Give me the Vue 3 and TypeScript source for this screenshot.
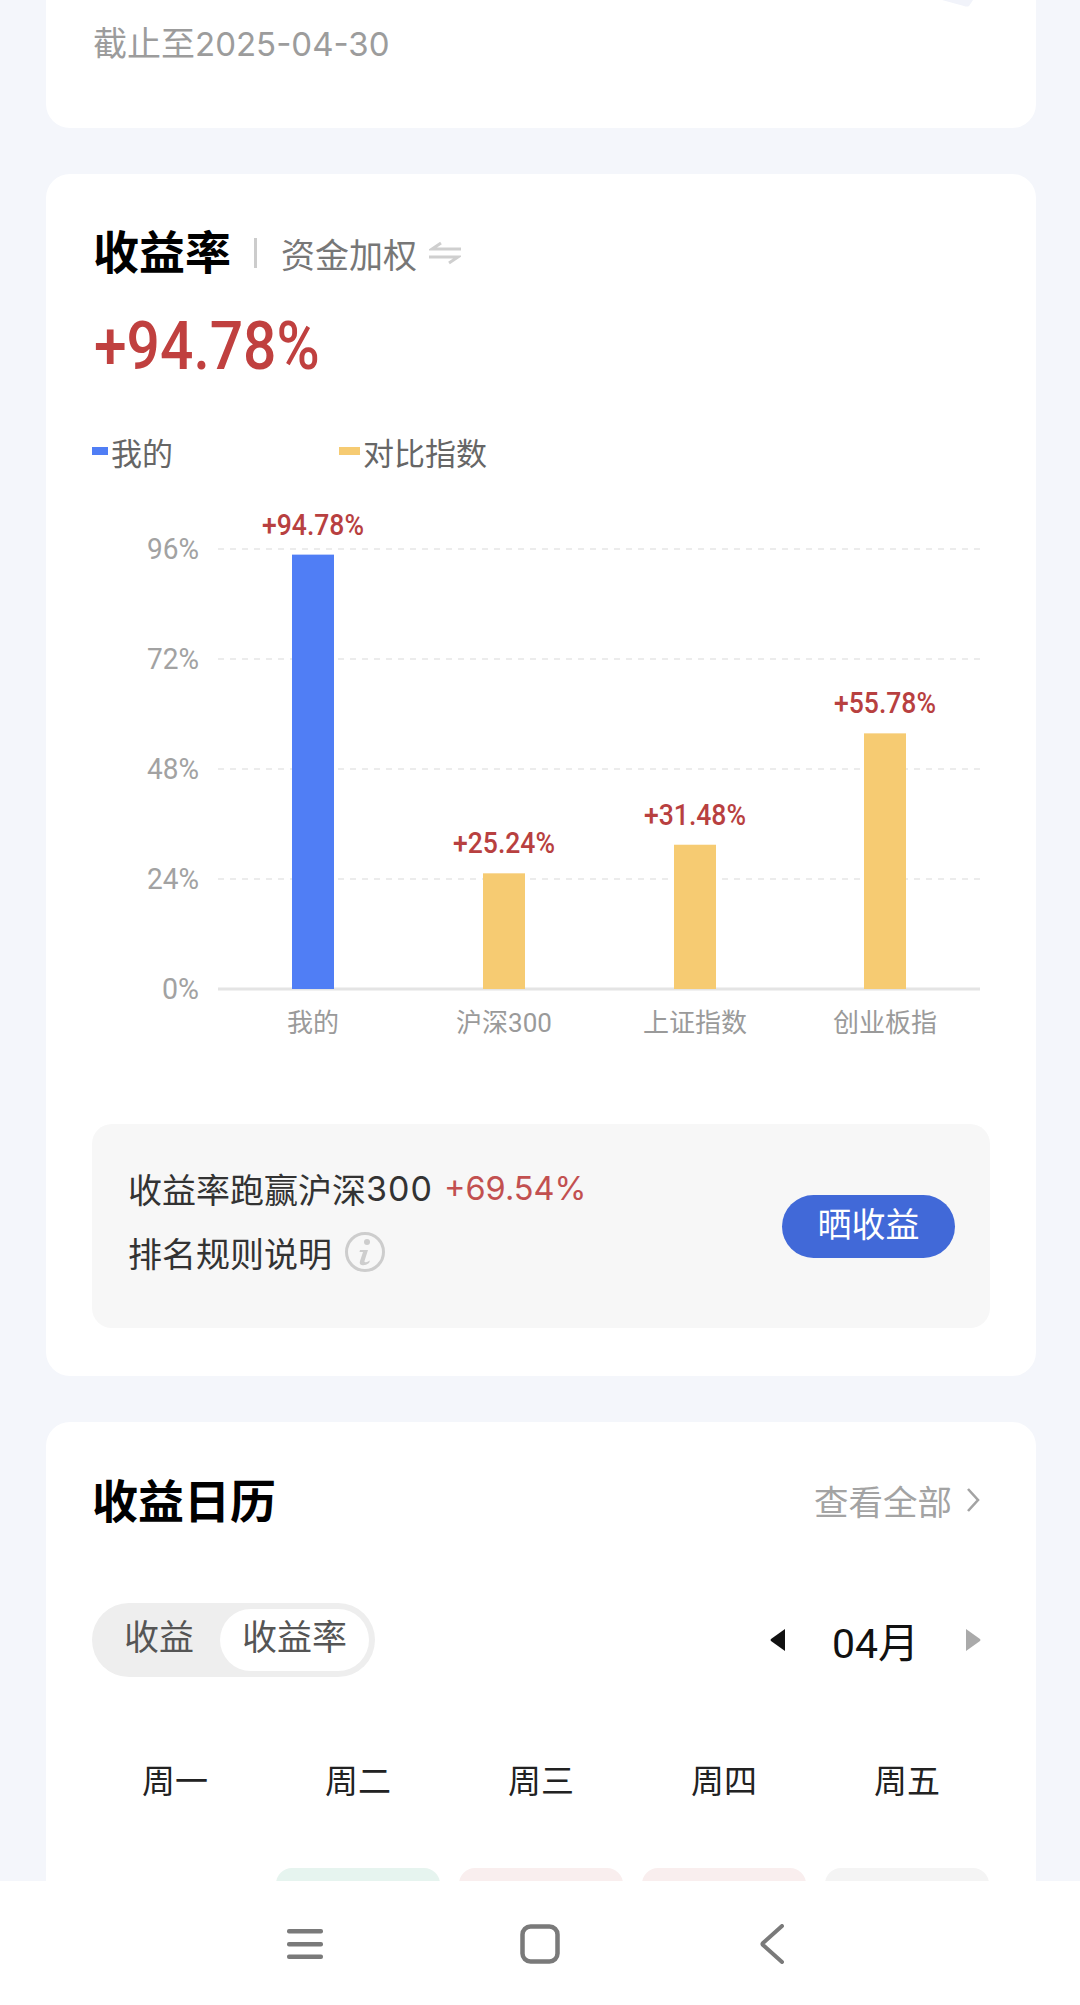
<script setup lang="ts">
interface Bar {
  name: string
  value: number
  label: string
  color: string
  x: number
}

const baseY = 989
const perPct = 4.583

const bars: Bar[] = [
  { name: '我的', value: 94.78, label: '+94.78%', color: '#507ef5', x: 313 },
  { name: '沪深300', value: 25.24, label: '+25.24%', color: '#f6cb72', x: 504 },
  { name: '上证指数', value: 31.48, label: '+31.48%', color: '#f6cb72', x: 695 },
  { name: '创业板指', value: 55.78, label: '+55.78%', color: '#f6cb72', x: 885 },
]
const ticks = [96, 72, 48, 24]
const weekdays = ['周一', '周二', '周三', '周四', '周五']
const cells = ['', '#e6f4ef', '#f9eeee', '#f9eeee', '#f4f4f4']

function tickY(t: number) {
  return baseY - t * perPct
}
</script>

<template>
  <div class="page">
    <section class="card card-top">
      <div class="date">截止至<span class="date-num">2025-04-30</span></div>
      <svg class="corner-mark" width="34" height="8" viewBox="0 0 34 8">
        <path d="M0 0 H31 L27 6 Q25 7 22 6 Z" fill="#f1f3fa" />
      </svg>
    </section>

    <section class="card card-rate">
      <div class="title-row">
        <h2 class="title">收益率</h2>
        <i class="divider"></i>
        <span class="mode">资金加权</span>
        <svg class="swap" width="32" height="24" viewBox="0 0 32 24" fill="none" stroke="#cfcfcf" stroke-width="3">
          <path d="M32 8 H3 L12 2" />
          <path d="M0 16 H29 L20 22" />
        </svg>
      </div>
      <div class="total">+94.78%</div>
      <div class="legend">
        <div class="legend-item mine"><i></i>我的</div>
        <div class="legend-item index"><i></i>对比指数</div>
      </div>

      <svg class="chart" width="990" height="560" viewBox="46 500 990 560">
        <g v-for="t in ticks" :key="t">
          <line x1="218" x2="980" :y1="tickY(t)" :y2="tickY(t)" stroke="#ececec" stroke-width="2" stroke-dasharray="6 6" />
          <text class="axis" x="199" :y="tickY(t) + 10" text-anchor="end" textLength="52" lengthAdjust="spacingAndGlyphs">{{ t }}%</text>
        </g>
        <text class="axis" x="199" :y="baseY + 10" text-anchor="end" textLength="37" lengthAdjust="spacingAndGlyphs">0%</text>
        <line x1="218" x2="980" :y1="baseY" :y2="baseY" stroke="#e4e4e4" stroke-width="3" />
        <g v-for="b in bars" :key="b.name">
          <rect :x="b.x - 21" :y="baseY - b.value * perPct" width="42" :height="b.value * perPct" :fill="b.color" />
          <text class="val" :x="b.x - 51" :y="baseY - b.value * perPct - 20" textLength="102" lengthAdjust="spacingAndGlyphs">{{ b.label }}</text>
          <text class="cat" :x="b.x" y="1032" text-anchor="middle">{{ b.name }}</text>
        </g>
      </svg>

      <div class="beat">
        <div class="beat-text">
          <div class="beat-line">收益率跑赢沪深<span class="num">300</span><span class="beat-pct">+69.54%</span></div>
          <div class="beat-line rule">排名规则说明<svg width="42" height="42" viewBox="0 0 42 42">
              <circle cx="21" cy="21" r="18.5" fill="none" stroke="#cdcdcd" stroke-width="3" />
              <circle cx="23" cy="11" r="3" fill="#cdcdcd" />
              <path d="M16 19 H24 L20.5 30 Q20 32 23 31 L26 29.5 L25 32 Q21 35 17.5 34 Q15 33 16 30 L19 21 H15.5 Z" fill="#cdcdcd" />
            </svg></div>
        </div>
        <div class="share">晒收益</div>
      </div>
    </section>

    <section class="card card-cal">
      <div class="cal-head">
        <h2 class="title">收益日历</h2>
        <div class="more">
          查看全部
          <svg width="14" height="26" viewBox="0 0 14 26" fill="none" stroke="#a3a3a3" stroke-width="2.6">
            <path d="M2 2 L12 13 L2 24" />
          </svg>
        </div>
      </div>
      <div class="cal-tools">
        <div class="seg">
          <span class="seg-item">收益</span>
          <span class="seg-item on">收益率</span>
        </div>
        <div class="month">
          <svg width="15" height="24" viewBox="0 0 15 24"><path d="M15 1 V23 L1 13 Q0 12 1 11 Z" fill="#111" /></svg>
          <span>04月</span>
          <svg width="15" height="24" viewBox="0 0 15 24"><path d="M0 1 V23 L14 13 Q15 12 14 11 Z" fill="#aaa" /></svg>
        </div>
      </div>
      <div class="week">
        <span v-for="d in weekdays" :key="d">{{ d }}</span>
      </div>
      <div class="days">
        <div v-for="(c, i) in cells" :key="i" class="day" :style="{ background: c || 'transparent' }"></div>
      </div>
    </section>

    <nav class="navbar">
      <svg width="38" height="32" viewBox="0 0 38 32" fill="#7a7a7a">
        <rect x="1" y="1" width="36" height="4.5" rx="2" />
        <rect x="1" y="14" width="36" height="4.5" rx="2" />
        <rect x="1" y="26.500" width="36" height="4.500" rx="2" />
      </svg>
      <svg width="40" height="40" viewBox="0 0 40 40" fill="none" stroke="#7a7a7a" stroke-width="4.500">
        <rect x="2.500" y="2.500" width="35" height="35" rx="8" />
      </svg>
      <svg width="26" height="40" viewBox="0 0 26 40" fill="none" stroke="#7a7a7a" stroke-width="4" stroke-linecap="round" stroke-linejoin="round">
        <path d="M23 2 L4 19 Q3 20 4 21 L23 38" />
      </svg>
    </nav>
  </div>
</template>

<style scoped>
.page {
  position: relative;
  width: 1080px;
  height: 2005px;
  overflow: hidden;
  background: #f4f6fb;
  padding: 0 44px 0 46px;
  box-sizing: border-box;
  font-family: Roboto, "Noto Sans CJK SC", sans-serif;
  color: #333;
}
.card {
  position: relative;
  background: #fff;
  border-radius: 24px;
  margin-bottom: 46px;
  width: 990px;
}
.card-top {
  height: 128px;
  border-radius: 0 0 24px 24px;
  padding: 20px 0 0 47px;
  box-sizing: border-box;
}
.date {
  font-size: 34px;
  line-height: 48px;
  color: #9c9c9c;
}
.date-num { font-family: Inter, sans-serif; font-size: 33px; }
.corner-mark { position: absolute; right: 60px; top: 0; }

.card-rate { height: 1202px; padding-top: 48px; box-sizing: border-box; }
.title-row {
  display: flex;
  align-items: center;
  padding-left: 47px;
  height: 62px;
}
.title {
  margin: 0;
  font-size: 46px;
  line-height: 62px;
  font-weight: 700;
  color: #000;
}
.divider {
  width: 3px;
  height: 30px;
  background: #ccc;
  margin: 0 24px 0 23px;
}
.mode { font-size: 34px; color: #777; }
.swap { margin-left: 12px; }
.total {
  margin: 24px 0 0 48px;
  height: 78px;
  line-height: 78px;
  font-size: 66px;
  font-weight: 500;
  color: #c0403f;
  transform: scaleX(0.89);
  transform-origin: left center;
}
.legend {
  display: flex;
  margin: 43px 0 0 46px;
  height: 44px;
  font-size: 31px;
  color: #666;
}
.legend-item { display: flex; align-items: center; }
.legend-item i {
  display: block;
  width: 16px;
  height: 8px;
  margin-right: 3px;
  background: #507ef5;
}
.mine { width: 247px; }
.index i { width: 21px; background: #f6cb72; }
.chart { display: block; margin-top: 27px; }
.axis { font-size: 29px; fill: #a2a2a2; font-family: Roboto, sans-serif; }
.val { font-size: 30px; font-weight: 500; fill: #b84040; font-family: Roboto, sans-serif; }
.cat { font-size: 26px; fill: #9a9a9a; font-family: Roboto, "Noto Sans CJK SC", sans-serif; }

.beat {
  display: flex;
  align-items: center;
  justify-content: space-between;
  box-sizing: border-box;
  width: 898px;
  height: 204px;
  margin: 64px 0 0 46px;
  padding: 0 35px 0 36px;
  background: #f7f7f7;
  border-radius: 20px;
}
.beat-text { padding-bottom: 12px; }
.beat-line {
  display: flex;
  align-items: center;
  height: 64px;
  font-size: 34px;
  color: #333;
}
.num { font-family: Inter, sans-serif; font-size: 34px; letter-spacing: 1px; }
.beat-pct { font-family: Inter, sans-serif; font-size: 32.500px; color: #c25050; margin-left: 11px; }
.rule svg { margin-left: 12px; }
.share {
  width: 173px;
  height: 63px;
  line-height: 60px;
  text-align: center;
  border-radius: 32px;
  background: #4169d8;
  color: #fff;
  font-size: 34px;
}

.card-cal { height: 640px; padding: 49px 46px 0; box-sizing: border-box; }
.cal-head {
  display: flex;
  align-items: center;
  justify-content: space-between;
  height: 62px;
}
.more {
  display: flex;
  align-items: center;
  gap: 14px;
  margin: -4px 10px 0 0;
  font-size: 34.500px;
  color: #a3a3a3;
}
.cal-tools {
  display: flex;
  align-items: center;
  justify-content: space-between;
  margin-top: 70px;
}
.seg {
  display: flex;
  box-sizing: border-box;
  width: 283px;
  height: 74px;
  padding: 6px;
  background: #eee;
  border-radius: 37px;
  font-size: 35px;
  color: #555;
}
.seg-item {
  display: block;
  line-height: 60px;
  text-align: center;
  width: 122px;
}
.seg-item.on {
  width: 149px;
  background: #fff;
  border-radius: 31px;
}
.month {
  display: flex;
  align-items: center;
  gap: 47px;
  margin-right: 9px;
  font-size: 41px;
  color: #111;
}
.week {
  display: grid;
  grid-template-columns: repeat(5, 164px);
  column-gap: 19px;
  margin: 83px 0 0 1px;
  font-size: 33px;
  line-height: 44px;
  color: #222;
  text-align: center;
}
.week span { display: block; }
.days {
  display: grid;
  grid-template-columns: repeat(5, 164px);
  column-gap: 19px;
  margin: 64px 0 0 1px;
}
.day { height: 120px; border-radius: 16px; }

.navbar {
  position: absolute;
  left: 0;
  right: 0;
  bottom: 0;
  height: 124px;
  background: #fff;
  box-sizing: border-box;
}
.navbar svg { position: absolute; top: 43px; }
.navbar svg:nth-child(1) { left: 286px; top: 47px; }
.navbar svg:nth-child(2) { left: 520px; }
.navbar svg:nth-child(3) { left: 759px; }
</style>
